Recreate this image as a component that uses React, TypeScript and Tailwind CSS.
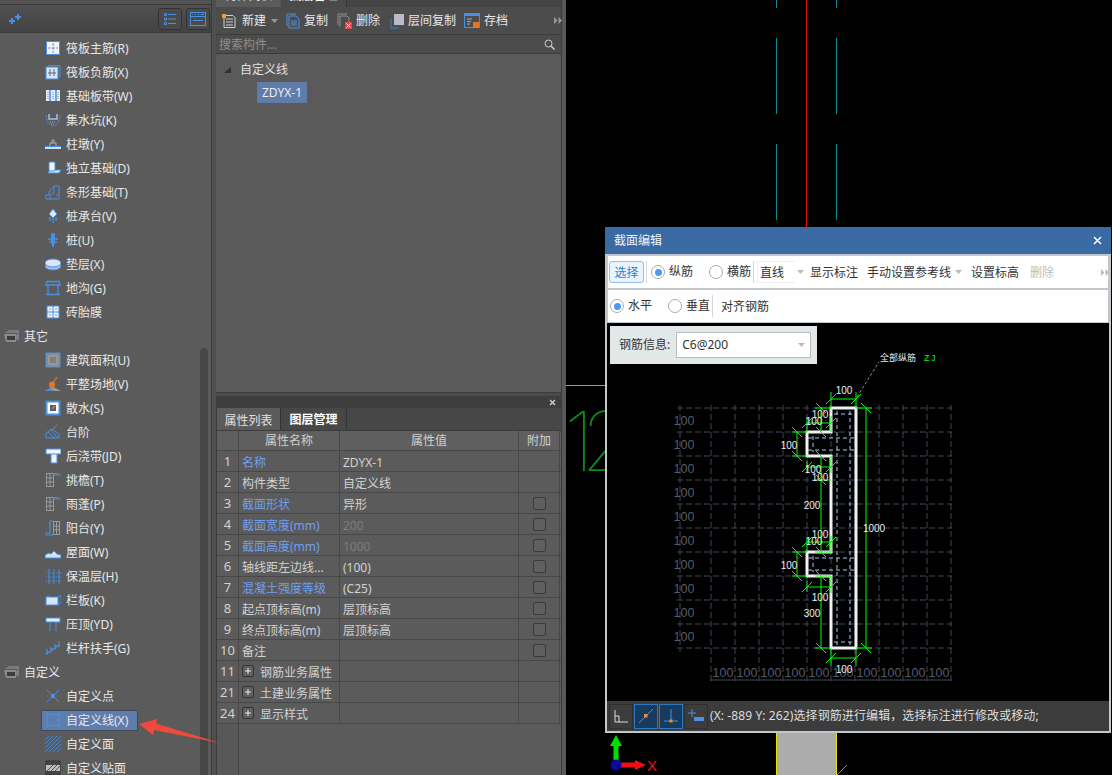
import React from "react";

const B = "#4a8fe0";
const L = "#dce9fa";
const G = "#9c9c9c";

const icons: Record<string, React.ReactNode> = {
  raft1: <><rect x="1.5" y="1.5" width="13" height="13" fill="#eef4fc" stroke={B} /><path d="M8 3v10M3 8h10" stroke="#8a97a8" strokeDasharray="3 1" /></>,
  raft2: <><path d="M3 1.5h12v12" fill="none" stroke={B} /><rect x="1" y="3" width="12" height="12" fill="#d5e5fa" stroke={B} /><path d="M5 5v7M9 5v7M3 9h8" stroke="#5b6b80" /></>,
  band: <><rect x="1" y="2" width="14" height="11" fill="#dfeafa" /><path d="M5 2v11M11 2v11" stroke={B} strokeWidth="1.5" /><path d="M3 4v8M8 4v8M13 4v8" stroke="#7a95bb" strokeDasharray="1 1" /></>,
  pit: <><path d="M1 3c1 8 4 11 7 11s6-3 7-11" fill="none" stroke={B} strokeDasharray="2 1" /><path d="M4 2v5h8V2" fill="none" stroke="#9fc0ea" strokeWidth="1.5" /><path d="M5 10h6M6 12h4" stroke="#aab" strokeDasharray="1 1" /></>,
  pier: <><path d="M0 11h16v2H0z" fill="#cfe0f7" /><path d="M0 10.5h16" stroke={B} /><path d="M5 10V7h6v3M7 7V4h2v3" fill="none" stroke="#b0b0b0" /></>,
  foot: <><path d="M3 13h11l2-3H5z" fill={L} stroke={B} /><rect x="4" y="2" width="6" height="9" rx="1" fill="#eef4fc" stroke={B} /></>,
  strip: <path d="M1 15V11h3V8l5-6h5v13zM9 2v7l-4 2v4M14 9l-3 3" fill="none" stroke={B} />,
  cap: <><path d="M8 1l4 5-4 4-4-4z" fill="#dbe8fa" stroke={B} /><path d="M5 9v4M8 10v5M11 9v4" stroke={B} strokeWidth="1.4" /></>,
  pile: <><rect x="6" y="1" width="4" height="11" rx="1" fill={B} /><path d="M3 7h10M4 10h8" stroke={B} strokeWidth="1.5" /><path d="M8 12v3" stroke={B} strokeWidth="2" /></>,
  pad: <><ellipse cx="8" cy="10" rx="8" ry="4" fill="#a8c5ef" stroke={B} /><ellipse cx="8" cy="7" rx="8" ry="4" fill="#dce7f6" stroke={B} /></>,
  ditch: <><path d="M1 1.5h14M0 5h16M3 5v9M13 5v9M1 14.5h14M2 2l-1 3M14 2l1 3" fill="none" stroke={B} strokeWidth="1.3" /></>,
  brick: <><rect x="2" y="2" width="12" height="12" fill="#e8f1fc" stroke={B} /><path d="M8 2v12M2 8h12" stroke={B} /><path d="M4 5h2M10 5h2M4 11h2M10 11h2" stroke="#8aa" /></>,
  area: <><rect x="1" y="1" width="14" height="14" fill="#8d8d8d" stroke={B} /><rect x="4" y="4" width="8" height="8" fill="#7f7f7f" stroke="#a8a8a8" /></>,
  land: <><path d="M0 15l6-3 4 0 6 3z" fill="#9b9b9b" /><path d="M0 15l5-3 4 3z" fill={B} /><path d="M12 1L8 7" stroke="#e8742a" strokeWidth="1.3" /><ellipse cx="7" cy="9" rx="3" ry="3.5" fill="#e8742a" /></>,
  apron: <><rect x="1.5" y="1.5" width="13" height="13" fill="#fff" stroke={B} strokeWidth="2" /><rect x="5" y="5" width="6" height="6" fill="#46627f" /><path d="M10 6L7 9" stroke="#e8742a" strokeWidth="1.5" /></>,
  step: <><path d="M1 14V9l6-4 7 5v4z" fill="none" stroke={B} /><path d="M3 8l6 6M6 6l6 7" stroke={B} /><path d="M8 5l4-4" stroke="#888" /></>,
  post: <><path d="M1 1h15v5h-4v9H6V6H1z" fill="#eef4fc" stroke={B} /><path d="M6 6h6" stroke={B} /></>,
  eave: <><rect x="1.5" y="1.5" width="7" height="13" fill="none" stroke={G} /><path d="M5 1.5v13M1.5 6h7M1.5 10h7" stroke={G} /><path d="M8 3h8M8 1.5h6" stroke={B} /></>,
  balc: <><rect x="8.5" y="1.5" width="6" height="13" fill="none" stroke={G} /><path d="M11.5 1.5v13M8.5 6h6M8.5 10h6" stroke={G} /><path d="M8 1h-3v12H0M8 13v2H0" fill="none" stroke={B} strokeWidth="1.2" /></>,
  roof: <path d="M0 14v-3l4-2 2 1 3-3 3 3 4 1v3z" fill="#cfe1f8" stroke={B} />,
  insul: <><path d="M4 1v15M9 1v15M14 1v15" stroke={B} /><path d="M1 5h15M1 9h15M1 13h15" stroke={B} strokeDasharray="1 1" /></>,
  panel: <><rect x="1" y="5" width="12" height="8" fill="#d4e4f9" stroke={B} /><path d="M13 5l3-2v7l-3 3M3 5V3" fill="none" stroke={B} /></>,
  coping: <><rect x="1" y="2" width="14" height="4" fill="#e3eefb" stroke={B} /><path d="M5 6v9M11 6v9" stroke={B} /></>,
  rail: <path d="M1 14l14-9M2 9v6M6 7v6M10 4v6M14 1v6M1 12h4M5 9h4M9 6h6" fill="none" stroke={B} />,
  point: <><path d="M2 2l12 12M14 2L2 14" stroke={B} /><rect x="6.5" y="6.5" width="3" height="3" fill="none" stroke={B} /></>,
  line: <><rect x="2.5" y="2.5" width="11" height="11" fill="none" stroke={B} /><circle cx="2.5" cy="2.5" r="1.5" fill={B} /><circle cx="13.5" cy="2.5" r="1.5" fill={B} /><circle cx="2.5" cy="13.5" r="1.5" fill={B} /><circle cx="13.5" cy="13.5" r="1.5" fill={B} /></>,
  face: <path d="M0 4l4-4M0 8l8-8M0 12L12 0M0 16L16 0M4 16L16 4M8 16l8-8M12 16l4-4" stroke={B} strokeWidth="0.8" />,
  decal: <><rect x="1" y="1" width="14" height="14" fill="#444" stroke="#333" /><rect x="1" y="5" width="14" height="6" fill="#bdbdbd" /><path d="M2 11l6-6M6 11l6-6M10 11l5-5" stroke="#555" /></>,
};

function Icon({ name }: { name: string }) {
  return (
    <svg width="16" height="16" viewBox="0 0 16 16" className="shrink-0">
      {icons[name]}
    </svg>
  );
}

function Folder() {
  return (
    <svg width="16" height="12" viewBox="0 0 16 12" className="shrink-0">
      <path d="M1 3l4-3h10v10h-2V3z" fill="#7c7c7c" />
      <path d="M0 4h12l1 2-1 6H2z" fill="#8a8a8a" />
      <rect x="3" y="6" width="8" height="4" fill="#3d3d3d" />
    </svg>
  );
}

type Row = { t: "g" | "i"; label: string; icon?: string; sel?: boolean };
const rows: Row[] = [
  { t: "i", label: "筏板主筋(R)", icon: "raft1" },
  { t: "i", label: "筏板负筋(X)", icon: "raft2" },
  { t: "i", label: "基础板带(W)", icon: "band" },
  { t: "i", label: "集水坑(K)", icon: "pit" },
  { t: "i", label: "柱墩(Y)", icon: "pier" },
  { t: "i", label: "独立基础(D)", icon: "foot" },
  { t: "i", label: "条形基础(T)", icon: "strip" },
  { t: "i", label: "桩承台(V)", icon: "cap" },
  { t: "i", label: "桩(U)", icon: "pile" },
  { t: "i", label: "垫层(X)", icon: "pad" },
  { t: "i", label: "地沟(G)", icon: "ditch" },
  { t: "i", label: "砖胎膜", icon: "brick" },
  { t: "g", label: "其它" },
  { t: "i", label: "建筑面积(U)", icon: "area" },
  { t: "i", label: "平整场地(V)", icon: "land" },
  { t: "i", label: "散水(S)", icon: "apron" },
  { t: "i", label: "台阶", icon: "step" },
  { t: "i", label: "后浇带(JD)", icon: "post" },
  { t: "i", label: "挑檐(T)", icon: "eave" },
  { t: "i", label: "雨蓬(P)", icon: "eave" },
  { t: "i", label: "阳台(Y)", icon: "balc" },
  { t: "i", label: "屋面(W)", icon: "roof" },
  { t: "i", label: "保温层(H)", icon: "insul" },
  { t: "i", label: "栏板(K)", icon: "panel" },
  { t: "i", label: "压顶(YD)", icon: "coping" },
  { t: "i", label: "栏杆扶手(G)", icon: "rail" },
  { t: "g", label: "自定义" },
  { t: "i", label: "自定义点", icon: "point" },
  { t: "i", label: "自定义线(X)", icon: "line", sel: true },
  { t: "i", label: "自定义面", icon: "face" },
  { t: "i", label: "自定义贴面", icon: "decal" },
];

function Sidebar() {
  return (
    <div className="relative flex h-full w-[212px] shrink-0 flex-col overflow-hidden border-r border-[#3b3b3b] bg-[#5b5b5b]">
      <div className="h-[5px] shrink-0 border-b border-[#3a3a3a] bg-[#525252]" />
      <div className="flex h-[28px] shrink-0 items-center justify-between border-b border-[#3a3a3a] bg-gradient-to-b from-[#505050] to-[#434343] pl-[8px] pr-[1px]">
        <svg width="14" height="12" viewBox="0 0 14 12">
          <path d="M3 5h2v2h2v2H5v2H3V9H1V7h2zM9 1h2v2h2v2h-2v2H9V5H7V3h2z" fill={B} />
        </svg>
        <div className="flex gap-[4px]">
          <div className="flex h-[22px] w-[24px] items-center justify-center rounded-[3px] border border-[#333] bg-[#4a4a4a]">
            <svg width="14" height="14" viewBox="0 0 14 14">
              <path d="M1.5 1.5h2v2h-2zM1.5 6h2v2h-2zM1.5 10.5h2v2h-2z" fill="none" stroke={B} />
              <path d="M5 2.5h8M5 7h8M5 11.5h8" stroke={B} />
            </svg>
          </div>
          <div className="flex h-[22px] w-[24px] items-center justify-center rounded-[3px] border border-[#333] bg-[#4a4a4a]">
            <svg width="16" height="14" viewBox="0 0 16 14">
              <rect x="0.5" y="0.5" width="15" height="13" fill="none" stroke={B} />
              <path d="M0.5 4.5h15M3 8.5h10M2 2.5h1M5 2.5h1M8 2.5h1M11 2.5h3" stroke={B} />
            </svg>
          </div>
        </div>
      </div>
      <div className="flex flex-col pt-[3px] text-[#e8e8e8]">
        {rows.map((r) =>
          r.t === "g" ? (
            <div key={r.label} className="flex h-[24px] items-center gap-[4px] pl-[4px]">
              <Folder />
              <span className="pt-[1px]">{r.label}</span>
            </div>
          ) : (
            <div key={r.label} className="flex h-[24px] shrink-0 items-center pl-[41px]">
              <div className={"flex h-[21px] w-[97px] items-center gap-[5px] border pl-[3px] " + (r.sel ? "border-[#3d4858] bg-[#5f7caa]" : "border-transparent")}>
                <Icon name={r.icon as string} />
                <span className="pt-[1px]">{r.label}</span>
              </div>
            </div>
          ),
        )}
      </div>
      <div className="absolute left-[200px] top-[348px] h-[440px] w-[8px] rounded-[4px] bg-[#474747]" />
    </div>
  );
}

function More({ color = "#9a9a9a" }: { color?: string }) {
  return (
    <svg width="8" height="7" viewBox="0 0 8 7">
      <path d="M0 0l3.5 3.5L0 7zM4.5 0L8 3.5 4.5 7z" fill={color} />
    </svg>
  );
}
function Caret({ color = "#9a9a9a" }: { color?: string }) {
  return (
    <svg width="7" height="4" viewBox="0 0 7 4" className="shrink-0">
      <path d="M0 0h7L3.5 4z" fill={color} />
    </svg>
  );
}

function TopPanel() {
  return (
    <div className="flex h-[392px] shrink-0 flex-col bg-[#5a5a5a]">
      <div className="flex h-[7px] shrink-0 items-end overflow-hidden bg-[#454545]">
        <div className="flex h-[7px] w-[65px] items-end justify-center overflow-hidden bg-[#5a5a5a]"><span className="mb-[4px] leading-[14px] text-[#ddd]">构件列表</span></div>
        <div className="flex h-[7px] w-[66px] items-end justify-center overflow-hidden border-r border-[#333] bg-[#4a4a4a]"><span className="mb-[4px] font-bold leading-[14px] text-white">图层管理</span></div>
      </div>
      <div className="flex h-[28px] shrink-0 items-center border-b border-[#3b3b3b] bg-[#4c4c4c] pl-[5px] text-[#e8e8e8]">
        <svg width="16" height="16" viewBox="0 0 16 16" className="shrink-0"><path d="M3 2.5h9l2 2v10H3z" fill="none" stroke="#cfcfcf" /><path d="M5 6h7M5 9h7M5 12h7" stroke="#cfcfcf" /><rect x="1" y="1" width="4" height="4" fill="#f09a3e" /></svg>
        <span className="ml-[5px]">新建</span>
        <span className="ml-[5px]"><Caret /></span>
        <span className="ml-[8px] flex"><svg width="15" height="16" viewBox="0 0 15 16"><path d="M1 13V1h9" fill="none" stroke={B} /><path d="M3 3h7l3 3v9H3z" fill="none" stroke={B} /><path d="M5 8h6M5 10h6M5 12h6" stroke={B} /></svg></span>
        <span className="ml-[3px]">复制</span>
        <span className="ml-[9px] flex"><svg width="16" height="16" viewBox="0 0 16 16"><path d="M1 12V1h9M3 14V3h7l2 2v4" fill="none" stroke="#8f8f8f" /><rect x="8" y="9" width="7" height="7" fill="#e0474c" /><path d="M9.5 10.5l4 4M13.5 10.5l-4 4" stroke="#fff" /></svg></span>
        <span className="ml-[3px]">删除</span>
        <span className="ml-[10px] flex"><svg width="15" height="16" viewBox="0 0 15 16"><path d="M1 6v9h8" fill="none" stroke="#3c6ea8" strokeWidth="1.5" /><rect x="4" y="1" width="10" height="11" fill="#b9bcc8" /></svg></span>
        <span className="ml-[3px]">层间复制</span>
        <span className="ml-[8px] flex"><svg width="16" height="16" viewBox="0 0 16 16"><rect x="0.5" y="0.5" width="15" height="14" fill="#4c4c4c" stroke={B} /><rect x="0" y="0" width="16" height="3" fill={B} /><path d="M3 6h5M3 8.5h4M3 11h3" stroke="#aaa" /><rect x="9" y="9" width="6" height="6" fill="#e8742a" /></svg></span>
        <span className="ml-[4px]">存档</span>
        <span className="ml-[46px] flex"><More /></span>
      </div>
      <div className="flex h-[19px] shrink-0 items-center justify-between border-b border-[#3b3b3b] bg-[#4c4c4c] pl-[3px] pr-[6px] text-[#8f8f8f]">
        <span className="pt-[1px]">搜索构件...</span>
        <svg width="11" height="11" viewBox="0 0 11 11"><circle cx="4.5" cy="4.5" r="3.5" fill="none" stroke="#cfcfcf" /><path d="M7 7l3.5 3.5" stroke="#cfcfcf" strokeWidth="1.5" /></svg>
      </div>
      <div className="flex items-center pl-[8px] pt-[6px] text-[#e0e0e0]">
        <svg width="8" height="7" viewBox="0 0 8 7"><path d="M7 0v6H0z" fill="#2e2e2e" /></svg>
        <span className="ml-[8px] leading-[20px]">自定义线</span>
      </div>
      <div className="ml-[41px] mt-[2px] flex h-[21px] w-[50px] items-center justify-center bg-[#5f7caa] pt-[1px] text-[#eee]">ZDYX-1</div>
    </div>
  );
}

const props = [
  { n: "1", a: "名称", v: "ZDYX-1", blue: true },
  { n: "2", a: "构件类型", v: "自定义线" },
  { n: "3", a: "截面形状", v: "异形", blue: true, box: true },
  { n: "4", a: "截面宽度(mm)", v: "200", blue: true, box: true, dim: true },
  { n: "5", a: "截面高度(mm)", v: "1000", blue: true, box: true, dim: true },
  { n: "6", a: "轴线距左边线...", v: "(100)", box: true },
  { n: "7", a: "混凝土强度等级", v: "(C25)", blue: true, box: true },
  { n: "8", a: "起点顶标高(m)", v: "层顶标高", box: true },
  { n: "9", a: "终点顶标高(m)", v: "层顶标高", box: true },
  { n: "10", a: "备注", v: "", box: true },
  { n: "11", a: "钢筋业务属性", v: "", plus: true },
  { n: "21", a: "土建业务属性", v: "", plus: true },
  { n: "24", a: "显示样式", v: "", plus: true },
];

function PropsPanel() {
  const line = "border-r border-[#484848]";
  return (
    <div className="flex min-h-0 flex-1 flex-col border-l border-[#3c3c3c] bg-[#5b5b5b]">
      <div className="flex h-[12px] shrink-0 items-center justify-end bg-[#3e3e3e] pr-[5px]">
        <svg width="7" height="7" viewBox="0 0 7 7"><path d="M1 1l5 5M6 1L1 6" stroke="#c8c8c8" strokeWidth="1.5" /></svg>
      </div>
      <div className="flex h-[23px] shrink-0 border-b border-[#3c3c3c] bg-[#474747]">
        <div className="flex w-[64px] items-center justify-center border-r border-[#333] bg-[#5b5b5b] pt-[3px] text-[#e0e0e0]">属性列表</div>
        <div className="flex w-[66px] items-center justify-center border-r border-[#333] pt-[1px] font-semibold text-white">图层管理</div>
      </div>
      <div className="flex h-[20px] shrink-0 border-b border-[#484848] bg-[#5f5f5f] text-[#cfcfcf]">
        <div className={"w-[22px] " + line} />
        <div className={"flex w-[101px] items-center justify-center pt-[1px] " + line}>属性名称</div>
        <div className={"flex w-[179px] items-center justify-center pt-[1px] " + line}>属性值</div>
        <div className={"flex w-[41px] items-center justify-center pt-[1px] " + line}>附加</div>
      </div>
      {props.map((p) => (
        <div key={p.n} className="flex h-[21px] shrink-0 border-b border-[#484848] text-[#d2d2d2]">
          <div className={"flex w-[22px] items-center justify-center pt-[2px] text-[13px] " + line}>{p.n}</div>
          <div className={"flex w-[101px] items-center pl-[3px] " + line + (p.blue ? " text-[#6f9ff0]" : "")}>
            {p.plus && (
              <span className="mr-[6px] flex h-[12px] w-[12px] items-center justify-center rounded-[2px] border border-[#333] bg-[#5f5f5f]">
                <svg width="6" height="6" viewBox="0 0 6 6"><path d="M3 0v6M0 3h6" stroke="#eee" /></svg>
              </span>
            )}
            <span className="pt-[3px]">{p.a}</span>
          </div>
          <div className={"flex w-[179px] items-center pl-[3px] pt-[3px] " + line + (p.dim ? " text-[#7d7d7d]" : "")}>{p.v}</div>
          <div className={"flex w-[41px] items-center justify-center " + line}>
            {p.box && <span className="h-[13px] w-[13px] rounded-[2px] border border-[#3a3a3a] bg-[#5f5f5f]" />}
          </div>
        </div>
      ))}
      <div className="flex min-h-0 flex-1"><div className="w-[22px] border-r border-[#484848] bg-[#585858]" /></div>
    </div>
  );
}

function Middle() {
  return (
    <div className="flex h-full w-[346px] shrink-0 flex-col border-r border-[#3b3b3b] bg-[#4a4a4a]">
      <TopPanel />
      <div className="h-[4px] shrink-0 border-t border-[#3c3c3c]" />
      <PropsPanel />
    </div>
  );
}

function Radio({ on, label }: { on?: boolean; label: string }) {
  return (
    <div className="flex items-center gap-[4px]">
      <span className="flex h-[14px] w-[14px] shrink-0 items-center justify-center rounded-full border border-[#aaa] bg-white">
        {on && <span className="h-[7px] w-[7px] rounded-full bg-[#4a9bf0]" />}
      </span>
      <span>{label}</span>
    </div>
  );
}

function CadLabel({ x, y, t, c = "#e8eef5" }: { x: number; y: number; t: string; c?: string }) {
  return (
    <text x={x} y={y + 3.5} textAnchor="middle" fontSize="10" fill={c} fontFamily="'Liberation Sans', sans-serif">{t}</text>
  );
}

function Cad() {
  const gy = [408, 432, 456, 480, 504, 528, 552, 576, 600, 624, 648];
  const gx = [712, 736, 760, 784, 808, 832, 856, 880, 904, 928, 952];
  const ticks: [number, number, number][] = [
    [832, 399, 1], [857, 399, 1], [832, 658, 1], [857, 658, 1],
    [822, 408, -1], [822, 432, -1], [822, 456, -1], [822, 480, -1], [822, 552, -1], [822, 576, -1], [822, 648, -1],
    [867, 408, -1], [867, 648, -1],
    [808, 423, 1], [832, 423, 1], [808, 467, 1], [832, 467, 1], [808, 542, 1], [832, 542, 1], [808, 587, 1], [832, 587, 1],
    [798, 432, -1], [798, 456, -1], [798, 552, -1], [798, 576, -1],
  ];
  const green = "#00ff00";
  return (
    <svg viewBox="608 323 501 378" width="501" height="378" className="block">
      {gy.map((y) => <line key={y} x1="678" y1={y} x2="953" y2={y} stroke="#3f4656" strokeDasharray="6 3" />)}
      <line x1="681" y1="405" x2="681" y2="652" stroke="#3f4656" strokeDasharray="6 3" />
      {gx.map((x) => <line key={x} x1={x} y1="405" x2={x} y2="682" stroke="#3f4656" strokeDasharray="6 3" />)}
      <line x1="711" y1="680" x2="953" y2="680" stroke="#3f4656" />
      {[420, 444, 468, 492, 516, 540, 564, 588, 612, 636].map((y) => (
        <text key={y} x="685" y={y + 5} textAnchor="middle" fontSize="12.5" fill="#555c6b" fontFamily="'Liberation Sans', sans-serif">100</text>
      ))}
      {[724, 748, 772, 796, 820, 844, 868, 892, 916, 940].map((x) => (
        <text key={x} x={x} y="677" textAnchor="middle" fontSize="12.5" fill="#555c6b" fontFamily="'Liberation Sans', sans-serif">100</text>
      ))}
      <path d="M838 411V645M851 411V645M835 414H855M809 438H855M809 450H855M809 558H855M809 570H855M835 642H855M814 436V452M814 556V572" stroke="#a8c8f0" strokeDasharray="4 3" fill="none" />
      <path d="M832 408H857V648H832V576H808V552H832V456H808V432H832Z" fill="none" stroke="#f0f0f0" strokeWidth="3" />
      <path
        d="M832 399H857M832 392V408M857 392V408M867 408V648M857 408H873M857 648H873M822 408V432M816 408H832M822 456V552M822 576V648M816 648H832M816 480H832M816 552H832M816 576H832M808 423H832M808 417V432M832 416V432M808 467H832M832 456V473M808 461V472M808 542H832M808 537V552M832 536V552M808 587H832M832 576V593M808 581V592M798 432V456M793 432H808M793 456H808M798 552V576M793 552H808M793 576H808M832 658H857M832 650V666M857 650V666"
        fill="none" stroke={green}
      />
      {ticks.map(([x, y, d], i) => (
        <line key={i} x1={x - 5} y1={y + 5 * d} x2={x + 5} y2={y - 5 * d} stroke={green} />
      ))}
      <line x1="858" y1="397" x2="880" y2="362" stroke="#888" strokeDasharray="3 2" />
      <text x="881" y="361" fontSize="9" fill="#e8e8e8" fontFamily="'Noto Sans CJK SC', sans-serif">全部纵筋</text>
      <text x="925" y="361" fontSize="9" letterSpacing="1" fill={green} fontFamily="'Liberation Mono', monospace">ZJ</text>
      <CadLabel x={845} y={390} t="100" />
      <CadLabel x={821} y={414} t="100" />
      <CadLabel x={815} y={421} t="100" />
      <CadLabel x={790} y={445} t="100" />
      <CadLabel x={814} y={469} t="100" />
      <CadLabel x={821} y={477} t="100" />
      <CadLabel x={813} y={505} t="200" />
      <CadLabel x={821} y={534} t="100" />
      <CadLabel x={815} y={541} t="100" />
      <CadLabel x={790} y={565} t="100" />
      <CadLabel x={821} y={597} t="100" />
      <CadLabel x={813} y={613} t="300" />
      <CadLabel x={845} y={669} t="100" />
      <CadLabel x={875} y={528} t="1000" />
    </svg>
  );
}

function Dialog() {
  const sep = <span className="h-[22px] w-px shrink-0 bg-[#d4d6d9]" />;
  return (
    <div className="absolute left-[39px] top-[227px] flex h-[506px] w-[506px] flex-col bg-[#c3c6cb] text-[#333]">
      <div className="flex h-[27px] shrink-0 items-center justify-between bg-[#3a6aa4] pl-[9px] pr-[9px] text-[#eef3fa]">
        <span className="pt-[1px]">截面编辑</span>
        <svg width="9" height="9" viewBox="0 0 9 9"><path d="M1 1l7 7M8 1L1 8" stroke="#fff" strokeWidth="1.5" /></svg>
      </div>
      <div className="mx-[3px] mt-[2px] flex h-[32px] shrink-0 items-center bg-white pl-[1px]">
        <span className="flex h-[22px] w-[35px] shrink-0 items-center justify-center rounded-[3px] border border-[#8fc0f0] bg-[#eaf4ff] pt-[1px] text-[#2f7fd0]">选择</span>
        <span className="ml-[2px] flex">{sep}</span>
        <span className="ml-[4px]"><Radio on label="纵筋" /></span>
        <span className="ml-[16px]"><Radio label="横筋" /></span>
        <span className="ml-[2px] flex">{sep}</span>
        <span className="ml-[3px] flex h-[22px] w-[38px] shrink-0 items-center border-y border-l border-[#f0f0f0] pl-[2px] pt-[1px]">直线</span>
        <span className="ml-[2px]"><Caret color="#bbb" /></span>
        <span className="ml-[6px] pt-[1px]">显示标注</span>
        <span className="ml-[9px] pt-[1px]">手动设置参考线</span>
        <span className="ml-[4px]"><Caret color="#bbb" /></span>
        <span className="ml-[9px] pt-[1px]">设置标高</span>
        <span className="ml-[11px] pt-[1px] text-[#bdbdbd]">删除</span>
        <span className="ml-[47px] flex"><More color="#bbb" /></span>
      </div>
      <div className="mx-[3px] mt-[2px] flex h-[32px] shrink-0 items-center bg-white pl-[2px]">
        <Radio on label="水平" />
        <span className="ml-[16px]"><Radio label="垂直" /></span>
        <span className="ml-[2px] flex">{sep}</span>
        <span className="ml-[8px] pt-[1px]">对齐钢筋</span>
      </div>
      <div className="relative mx-[2px] mt-[1px] h-[378px] w-[502px] shrink-0 overflow-hidden bg-black">
        <Cad />
        <div className="absolute left-[3px] top-[3px] flex h-[38px] w-[207px] items-center bg-[#e2e7e8] pl-[9px]">
          <span>钢筋信息:</span>
          <div className="ml-[6px] flex h-[26px] w-[135px] items-center justify-between border border-[#bbb] bg-white pl-[5px] pr-[5px]">
            <span>C6@200</span>
            <Caret color="#bbb" />
          </div>
        </div>
      </div>
      <div className="mx-[2px] flex h-[30px] shrink-0 items-center gap-[1px] bg-[#3c3c3c] pl-[2px] text-[#dcdcdc]">
        <span className="flex h-[25px] w-[24px] items-center justify-center border border-[#2f2f2f]">
          <svg width="14" height="13" viewBox="0 0 14 13"><path d="M1 0v12h13M1 6h4v6" fill="none" stroke="#ddd" /></svg>
        </span>
        <span className="flex h-[25px] w-[24px] items-center justify-center border border-[#2f78c0] bg-[#163b5f]">
          <svg width="16" height="16" viewBox="0 0 16 16"><path d="M1 15L15 1" stroke={B} /><rect x="6" y="6" width="3.5" height="3.5" fill="#f08a3c" /></svg>
        </span>
        <span className="flex h-[25px] w-[24px] items-center justify-center border border-[#2f78c0] bg-[#163b5f]">
          <svg width="16" height="16" viewBox="0 0 16 16"><path d="M8 1v12M1 13h14" stroke={B} /><rect x="6.5" y="11.5" width="3" height="3" fill="#f08a3c" /></svg>
        </span>
        <span className="flex h-[25px] w-[24px] items-center justify-center border border-[#2f2f2f]">
          <svg width="17" height="16" viewBox="0 0 17 16"><path d="M4 1v8M0 5h8" stroke={B} /><rect x="6" y="9" width="10" height="4" fill={B} /></svg>
        </span>
        <span className="ml-[1px] tracking-[0.1px]">(X: -889 Y: 262)选择钢筋进行编辑，选择标注进行修改或移动;</span>
      </div>
    </div>
  );
}

function Canvas() {
  return (
    <div className="relative h-full min-w-0 flex-1 overflow-hidden bg-black">
      <svg viewBox="566 0 546 775" width="546" height="775" className="block">
        <path d="M776.5 0V8M776.5 38V114M776.5 144V220M836.5 0V8M836.5 38V114M836.5 144V220" stroke="#0c8a8f" />
        <path d="M806.5 0V230M806.5 733V740" stroke="#e01010" />
        <line x1="566" y1="385.5" x2="606" y2="385.5" stroke="#c8982a" />
        <text x="564" y="471" fontSize="82" fontWeight="100" letterSpacing="-13" fill="#0d8a1a" fontFamily="Inter, sans-serif">12</text>
        <rect x="776" y="733" width="61" height="42" fill="#acacac" />
        <path d="M776.5 733V775M836.5 733V775" stroke="#e8e000" />
        <line x1="837" y1="775" x2="847" y2="765" stroke="#b08a20" />
        <path d="M616 765V745" stroke="#00e000" strokeWidth="5" />
        <path d="M616 735l6 11h-12z" fill="#00e000" />
        <path d="M616 765H636" stroke="#f01010" strokeWidth="5" />
        <path d="M646 765l-11 -5v10z" fill="#f01010" />
        <circle cx="616" cy="765" r="5.5" fill="#0808a0" />
        <text x="647" y="771" fontSize="15" fill="#f01010" fontFamily="'Liberation Sans', sans-serif">X</text>
      </svg>
      <Dialog />
    </div>
  );
}

export default function App() {
  return (
    <div className="relative flex h-[775px] w-[1112px] overflow-hidden whitespace-nowrap bg-[#565656] text-[12px] font-['Noto_Sans','Noto_Sans_CJK_SC',sans-serif]">
      <Sidebar />
      <div className="h-full w-[4px] shrink-0 bg-[#4f4f4f]" />
      <Middle />
      <div className="h-full w-[4px] shrink-0 bg-[#585858]" />
      <Canvas />
      <svg width="90" height="40" viewBox="135 710 90 40" className="absolute left-[135px] top-[710px]">
        <path d="M139 724L157 719L156 723.5L220 743L154 730L153 735Z" fill="#f24a3a" />
      </svg>
    </div>
  );
}
